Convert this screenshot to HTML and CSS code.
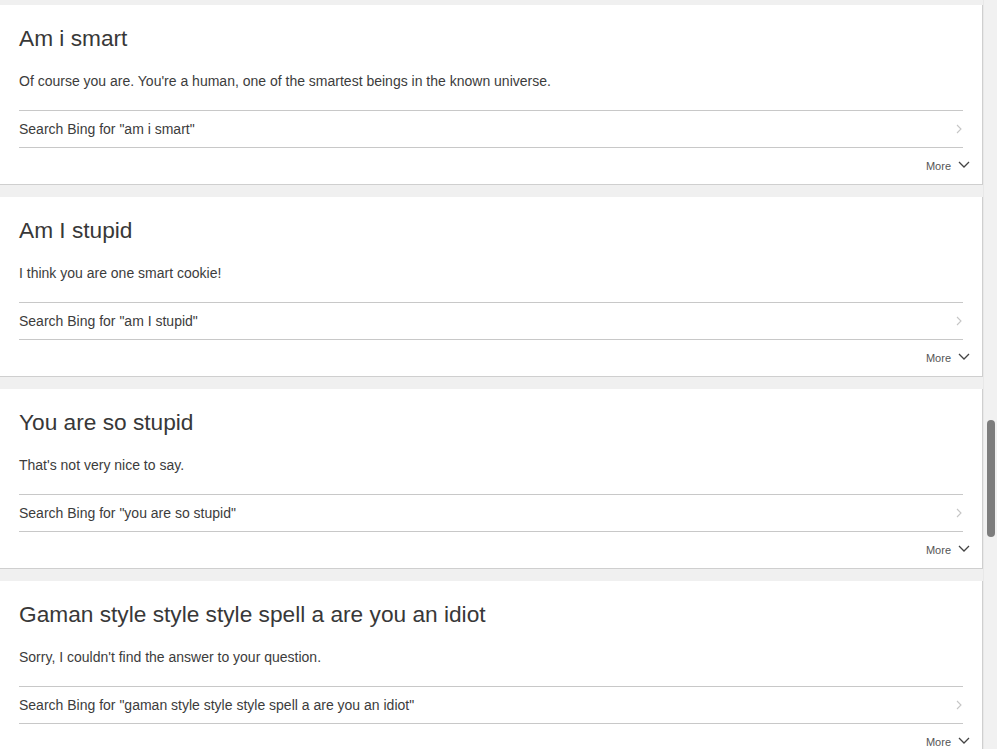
FILE: index.html
```html
<!DOCTYPE html>
<html>
<head>
<meta charset="utf-8">
<link rel="stylesheet" href="styles.css">
</head>
<body>
<div class="page">
  <div class="list">
    <div class="card">
      <h2 class="title">Am i smart</h2>
      <p class="answer">Of course you are. You're a human, one of the smartest beings in the known universe.</p>
      <div class="search"><span>Search Bing for "am i smart"</span><svg class="chev-r" viewBox="0 0 6 10" width="6" height="10"><path d="M1 1l4 4-4 4" fill="none" stroke="#c6c6c6" stroke-width="1.1"/></svg></div>
      <div class="more"><span>More</span><svg class="chev-d" viewBox="0 0 12 7" width="12" height="7"><path d="M1 1l5 5 5-5" fill="none" stroke="#444" stroke-width="1.3"/></svg></div>
    </div>
    <div class="card">
      <h2 class="title">Am I stupid</h2>
      <p class="answer">I think you are one smart cookie!</p>
      <div class="search"><span>Search Bing for "am I stupid"</span><svg class="chev-r" viewBox="0 0 6 10" width="6" height="10"><path d="M1 1l4 4-4 4" fill="none" stroke="#c6c6c6" stroke-width="1.1"/></svg></div>
      <div class="more"><span>More</span><svg class="chev-d" viewBox="0 0 12 7" width="12" height="7"><path d="M1 1l5 5 5-5" fill="none" stroke="#444" stroke-width="1.3"/></svg></div>
    </div>
    <div class="card">
      <h2 class="title">You are so stupid</h2>
      <p class="answer">That's not very nice to say.</p>
      <div class="search"><span>Search Bing for "you are so stupid"</span><svg class="chev-r" viewBox="0 0 6 10" width="6" height="10"><path d="M1 1l4 4-4 4" fill="none" stroke="#c6c6c6" stroke-width="1.1"/></svg></div>
      <div class="more"><span>More</span><svg class="chev-d" viewBox="0 0 12 7" width="12" height="7"><path d="M1 1l5 5 5-5" fill="none" stroke="#444" stroke-width="1.3"/></svg></div>
    </div>
    <div class="card">
      <h2 class="title">Gaman style style style spell a are you an idiot</h2>
      <p class="answer">Sorry, I couldn't find the answer to your question.</p>
      <div class="search"><span>Search Bing for "gaman style style style spell a are you an idiot"</span><svg class="chev-r" viewBox="0 0 6 10" width="6" height="10"><path d="M1 1l4 4-4 4" fill="none" stroke="#c6c6c6" stroke-width="1.1"/></svg></div>
      <div class="more"><span>More</span><svg class="chev-d" viewBox="0 0 12 7" width="12" height="7"><path d="M1 1l5 5 5-5" fill="none" stroke="#444" stroke-width="1.3"/></svg></div>
    </div>
  </div>
  <div class="scrollbar"><div class="thumb"></div></div>
</div>
</body>
</html>
```
FILE: styles.css
```css
html, body {
  margin: 0;
  padding: 0;
  height: 749px;
  overflow: hidden;
  background: #f0f0f0;
  font-family: "Liberation Sans", Arial, sans-serif;
  color: #333;
}
.page {
  display: flex;
  height: 749px;
}
.list {
  flex: 1;
  display: flex;
  flex-direction: column;
  gap: 12px;
  padding-top: 5px;
}
.card {
  background: #fff;
  border-right: 1px solid #cfcfcf;
  border-bottom: 1px solid #cfcfcf;
  padding: 19px 19px 0 19px;
  flex-shrink: 0;
}
.title {
  margin: 0;
  font-size: 22.7px;
  line-height: 28px;
  font-weight: normal;
  color: #383838;
}
.answer {
  margin: 19px 0 0;
  font-size: 14px;
  line-height: 20px;
  color: #3c3c3c;
}
.search {
  margin-top: 19px;
  border-top: 1px solid #c8c8c8;
  border-bottom: 1px solid #c8c8c8;
  height: 36px;
  display: flex;
  align-items: center;
  justify-content: space-between;
  font-size: 14px;
  color: #3c3c3c;
}
.chev-r {
  margin-right: 1px;
}
.more {
  height: 36px;
  display: flex;
  align-items: center;
  justify-content: flex-end;
  gap: 7px;
  margin-right: -7px;
  font-size: 11px;
  color: #555;
}
.chev-d {
  margin-top: -3px;
}
.scrollbar {
  width: 13px;
  flex-shrink: 0;
  background: #f1f1f1;
  border-left: 1px solid #e8e8e8;
  display: flex;
  justify-content: center;
}
.thumb {
  margin-top: 420px;
  width: 8px;
  height: 117px;
  border-radius: 4px;
  background: #7d7d7d;
}
```
